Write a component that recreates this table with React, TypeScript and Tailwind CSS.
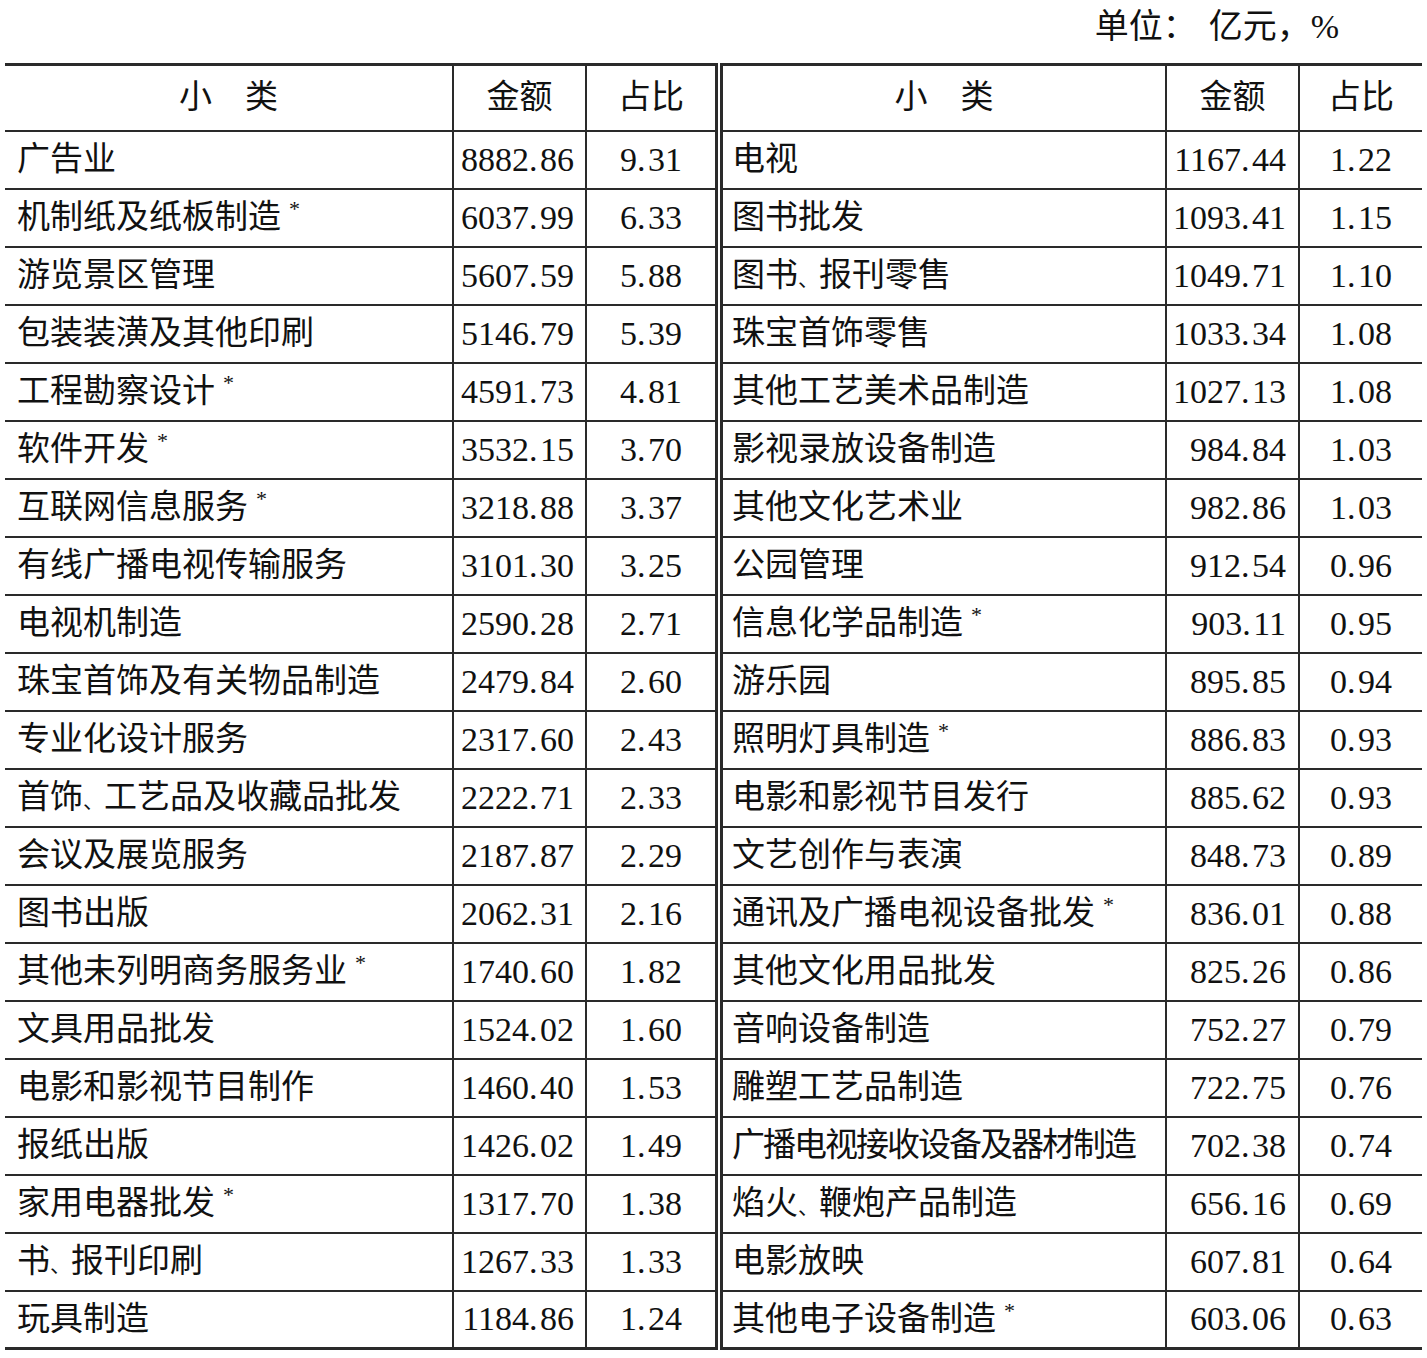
import React from "react";

type Row = { name: string; star?: boolean; tight?: boolean; amount: string; share: string };

const left: Row[] = [
  { name: "广告业", amount: "8882.86", share: "9.31" },
  { name: "机制纸及纸板制造", star: true, amount: "6037.99", share: "6.33" },
  { name: "游览景区管理", amount: "5607.59", share: "5.88" },
  { name: "包装装潢及其他印刷", amount: "5146.79", share: "5.39" },
  { name: "工程勘察设计", star: true, amount: "4591.73", share: "4.81" },
  { name: "软件开发", star: true, amount: "3532.15", share: "3.70" },
  { name: "互联网信息服务", star: true, amount: "3218.88", share: "3.37" },
  { name: "有线广播电视传输服务", amount: "3101.30", share: "3.25" },
  { name: "电视机制造", amount: "2590.28", share: "2.71" },
  { name: "珠宝首饰及有关物品制造", amount: "2479.84", share: "2.60" },
  { name: "专业化设计服务", amount: "2317.60", share: "2.43" },
  { name: "首饰、工艺品及收藏品批发", amount: "2222.71", share: "2.33" },
  { name: "会议及展览服务", amount: "2187.87", share: "2.29" },
  { name: "图书出版", amount: "2062.31", share: "2.16" },
  { name: "其他未列明商务服务业", star: true, amount: "1740.60", share: "1.82" },
  { name: "文具用品批发", amount: "1524.02", share: "1.60" },
  { name: "电影和影视节目制作", amount: "1460.40", share: "1.53" },
  { name: "报纸出版", amount: "1426.02", share: "1.49" },
  { name: "家用电器批发", star: true, amount: "1317.70", share: "1.38" },
  { name: "书、报刊印刷", amount: "1267.33", share: "1.33" },
  { name: "玩具制造", amount: "1184.86", share: "1.24" },
];

const right: Row[] = [
  { name: "电视", amount: "1167.44", share: "1.22" },
  { name: "图书批发", amount: "1093.41", share: "1.15" },
  { name: "图书、报刊零售", amount: "1049.71", share: "1.10" },
  { name: "珠宝首饰零售", amount: "1033.34", share: "1.08" },
  { name: "其他工艺美术品制造", amount: "1027.13", share: "1.08" },
  { name: "影视录放设备制造", amount: "984.84", share: "1.03" },
  { name: "其他文化艺术业", amount: "982.86", share: "1.03" },
  { name: "公园管理", amount: "912.54", share: "0.96" },
  { name: "信息化学品制造", star: true, amount: "903.11", share: "0.95" },
  { name: "游乐园", amount: "895.85", share: "0.94" },
  { name: "照明灯具制造", star: true, amount: "886.83", share: "0.93" },
  { name: "电影和影视节目发行", amount: "885.62", share: "0.93" },
  { name: "文艺创作与表演", amount: "848.73", share: "0.89" },
  { name: "通讯及广播电视设备批发", star: true, amount: "836.01", share: "0.88" },
  { name: "其他文化用品批发", amount: "825.26", share: "0.86" },
  { name: "音响设备制造", amount: "752.27", share: "0.79" },
  { name: "雕塑工艺品制造", amount: "722.75", share: "0.76" },
  { name: "广播电视接收设备及器材制造", tight: true, amount: "702.38", share: "0.74" },
  { name: "焰火、鞭炮产品制造", amount: "656.16", share: "0.69" },
  { name: "电影放映", amount: "607.81", share: "0.64" },
  { name: "其他电子设备制造", star: true, amount: "603.06", share: "0.63" },
];

// decimal point in the source is set wider than usual
const Num = ({ v }: { v: string }) => {
  const [a, b] = v.split(".");
  return (
    <span className="text-[34px]">
      {a}
      <span className="inline-block w-[11px] text-left">.</span>
      {b}
    </span>
  );
};

// the enumeration comma is set half-width in the source
const Name = ({ row }: { row: Row }) => {
  const parts = row.name.split("、");
  return (
    <span className={row.tight ? "tracking-[-2px]" : ""}>
      {parts.map((p, i) => (
        <React.Fragment key={i}>
          {i > 0 && <span className="text-[21px]">、</span>}
          {p}
        </React.Fragment>
      ))}
      {row.star && <sup className="ml-[8px] text-[22px] top-[-0.55em]">*</sup>}
    </span>
  );
};

const cell = "border-[#2a2a2a] border-l-2 border-b-2";

export default function App() {
  return (
    <div className="w-[1427px] bg-white text-[#111] font-['Liberation_Serif','Noto_Sans_CJK_SC',serif]">
      <div className="h-[63px] pt-[7px] pr-[88px] text-right text-[34px] leading-[40px]">
        单位：<span className="ml-[12px]">亿元，%</span>
      </div>
      <table className="ml-[5px] w-[1417px] table-fixed border-collapse border-t-[3px] border-b-[3px] border-[#2a2a2a] text-[33px] leading-none">
        <colgroup>
          <col className="w-[448px]" />
          <col className="w-[133px]" />
          <col className="w-[133px]" />
          <col className="w-[447px]" />
          <col className="w-[133px]" />
          <col className="w-[123px]" />
        </colgroup>
        <thead>
          <tr className="h-[66px]">
            <th className="border-[#2a2a2a] border-b-2 font-normal">小　类</th>
            <th className={`${cell} font-normal`}>金额</th>
            <th className={`${cell} font-normal`}>占比</th>
            <th className="border-[#2a2a2a] border-l-[8px] border-double border-b-2 font-normal">小　类</th>
            <th className={`${cell} font-normal`}>金额</th>
            <th className={`${cell} font-normal`}>占比</th>
          </tr>
        </thead>
        <tbody>
          {left.map((l, i) => {
            const r = right[i];
            return (
              <tr key={l.name} className="h-[58px]">
                <td className="border-[#2a2a2a] border-b-2 pl-[12px] whitespace-nowrap">
                  <Name row={l} />
                </td>
                <td className={`${cell} pr-[11px] text-right`}>
                  <Num v={l.amount} />
                </td>
                <td className={`${cell} text-center`}>
                  <Num v={l.share} />
                </td>
                <td className="border-[#2a2a2a] border-l-[8px] border-double border-b-2 pl-[9px] whitespace-nowrap">
                  <Name row={r} />
                </td>
                <td className={`${cell} pr-[12px] text-right`}>
                  <Num v={r.amount} />
                </td>
                <td className={`${cell} text-center`}>
                  <Num v={r.share} />
                </td>
              </tr>
            );
          })}
        </tbody>
      </table>
    </div>
  );
}
